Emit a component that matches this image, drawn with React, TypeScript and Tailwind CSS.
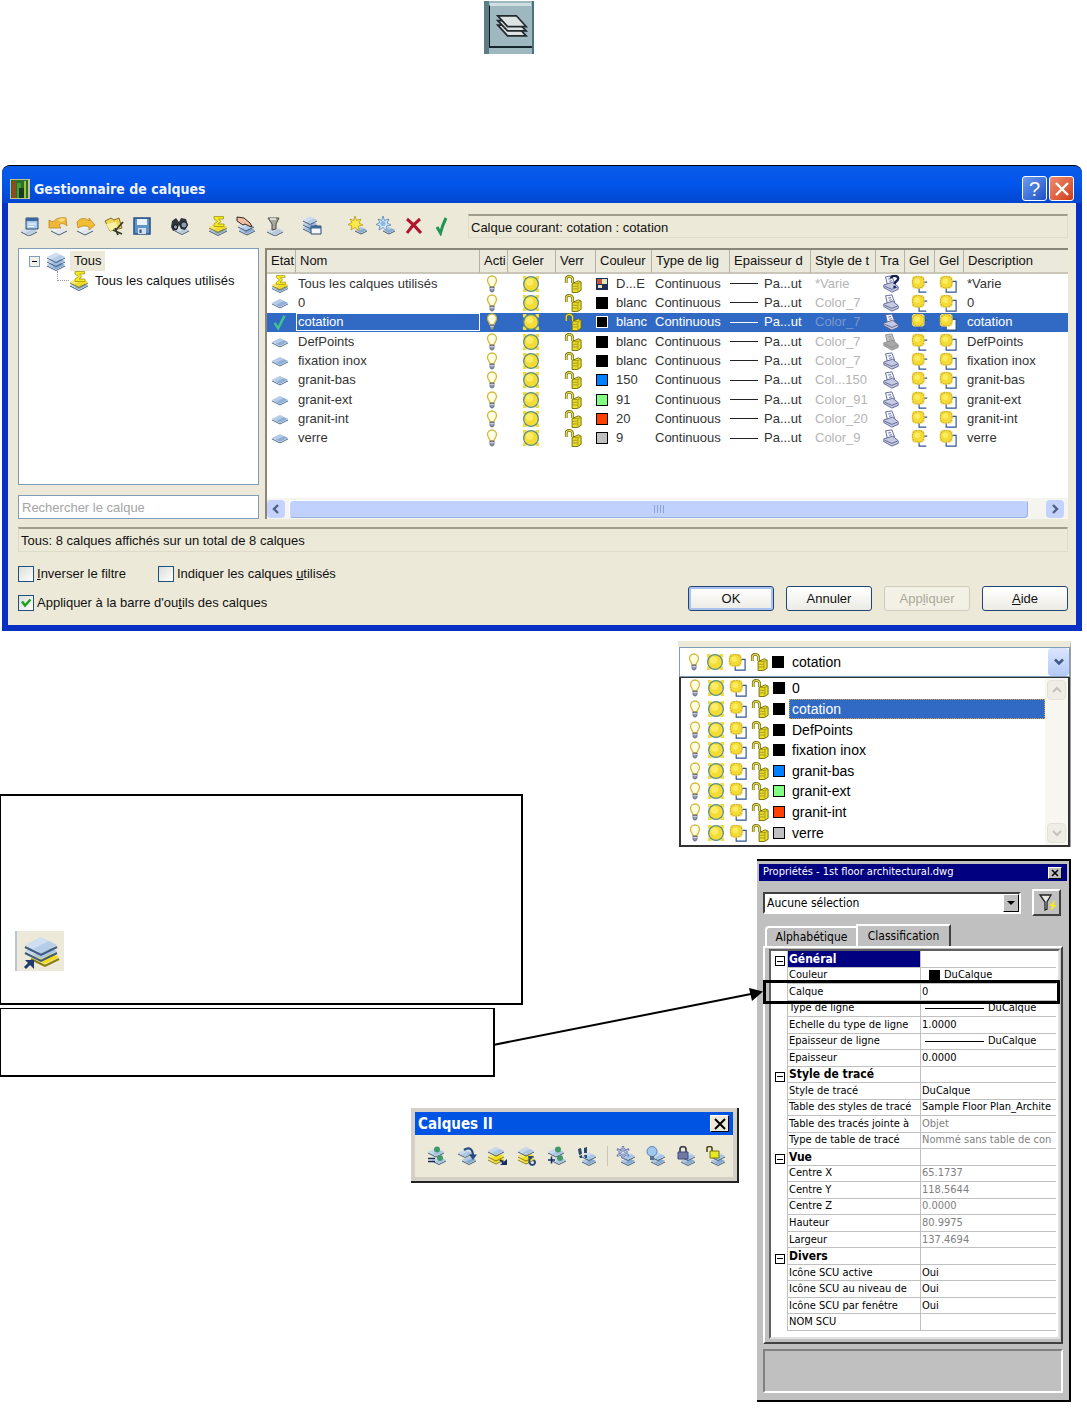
import { useState } from "react";
import type { ReactNode } from "react";

type Layer = {
  name: string;
  color: string;
  hex: string;
  plotStyle: string;
  kind?: "filter" | "current" | "noplot";
};

type Property = {
  label: string;
  value?: string;
  section?: boolean;
  muted?: boolean;
  sample?: "swatch" | "line";
};

const layers: Layer[] = [
  { name: "Tous les calques utilisés", color: "D...E", hex: "#ffffff", plotStyle: "*Varie", kind: "filter" },
  { name: "0", color: "blanc", hex: "#000000", plotStyle: "Color_7" },
  { name: "cotation", color: "blanc", hex: "#000000", plotStyle: "Color_7", kind: "current" },
  { name: "DefPoints", color: "blanc", hex: "#000000", plotStyle: "Color_7", kind: "noplot" },
  { name: "fixation inox", color: "blanc", hex: "#000000", plotStyle: "Color_7" },
  { name: "granit-bas", color: "150", hex: "#0080ff", plotStyle: "Col...150" },
  { name: "granit-ext", color: "91", hex: "#80ff80", plotStyle: "Color_91" },
  { name: "granit-int", color: "20", hex: "#ff4000", plotStyle: "Color_20" },
  { name: "verre", color: "9", hex: "#c0c0c0", plotStyle: "Color_9" },
];

const headers = [
  "Etat",
  "Nom",
  "Acti",
  "Geler",
  "Verr",
  "Couleur",
  "Type de lig",
  "Epaisseur d",
  "Style de t",
  "Tra",
  "Gel",
  "Gel",
  "Description",
];

const properties: Property[] = [
  { label: "Général", section: true },
  { label: "Couleur", value: "DuCalque", sample: "swatch" },
  { label: "Calque", value: "0" },
  { label: "Type de ligne", value: "DuCalque", sample: "line" },
  { label: "Echelle du type de ligne", value: "1.0000" },
  { label: "Epaisseur de ligne", value: "DuCalque", sample: "line" },
  { label: "Epaisseur", value: "0.0000" },
  { label: "Style de tracé", section: true },
  { label: "Style de tracé", value: "DuCalque" },
  { label: "Table des styles de tracé", value: "Sample Floor Plan_Archite" },
  { label: "Table des tracés jointe à", value: "Objet", muted: true },
  { label: "Type de table de tracé", value: "Nommé sans table de con", muted: true },
  { label: "Vue", section: true },
  { label: "Centre X", value: "65.1737", muted: true },
  { label: "Centre Y", value: "118.5644", muted: true },
  { label: "Centre Z", value: "0.0000", muted: true },
  { label: "Hauteur", value: "80.9975", muted: true },
  { label: "Largeur", value: "137.4694", muted: true },
  { label: "Divers", section: true },
  { label: "Icône SCU active", value: "Oui" },
  { label: "Icône SCU au niveau de", value: "Oui" },
  { label: "Icône SCU par fenêtre", value: "Oui" },
  { label: "NOM SCU" },
];

/* ---------- icons ---------- */

function Icon({ children, className = "size-5" }: { children: ReactNode; className?: string }) {
  return (
    <svg viewBox="0 0 20 20" className={`${className} block shrink-0`} aria-hidden="true">
      {children}
    </svg>
  );
}

function Plate({ x = 10, y, r = 8, fill = "#a9c4e4" }: { x?: number; y: number; r?: number; fill?: string }) {
  return (
    <g>
      <path
        d={`M${x - r} ${y + 1}L${x} ${y + r / 2 + 1}L${x + r} ${y + 1}`}
        fill="none"
        stroke={fill === "#f2dc1c" ? "#8a7d08" : "#3d5a7c"}
        strokeWidth="1"
      />
      <path d={`M${x - r} ${y}L${x} ${y - r / 2}L${x + r} ${y}L${x} ${y + r / 2}Z`} fill={fill} />
      <path d={`M${x - r} ${y}L${x} ${y - r / 2}L${x + r / 2} ${y - r / 4}L${x - r / 2} ${y + r / 4}Z`} fill="#ffffff" opacity="0.35" />
    </g>
  );
}

function Stack() {
  return (
    <>
      <Plate y={14} r={9} fill="#86a9d2" />
      <Plate y={10} r={9} fill="#9bb9dc" />
      <Plate y={6} r={9} fill="#b5cde8" />
    </>
  );
}

function Sigma() {
  return <path d="M6 .5h9.500v2.500h-5L13 5.500 10 8h6v2.500H6V8l3.500-2.500L6 3z" fill="#f5ea1e" stroke="#a3951a" strokeWidth="0.8" />;
}

function FilterIcon({ className }: { className?: string }) {
  return (
    <Icon className={className}>
      <Plate y={14} r={9} fill="#86a9d2" />
      <Plate y={11} r={9} fill="#f2dc1c" />
      <Sigma />
    </Icon>
  );
}

function BulbIcon() {
  return (
    <svg viewBox="0 0 12 18" className="block h-[18px] w-3 shrink-0" aria-hidden="true">
      <path d="M4 12C4 9.500 1.500 8.500 1.500 5.500a4.500 4.500 0 0 1 9 0C10.500 8.500 8 9.500 8 12z" fill="#fffde0" stroke="#d3b83c" strokeWidth="1.300" />
      <path d="M4 4.500a2 2 0 0 1 2-1.800" fill="none" stroke="#fff" strokeWidth="1.200" />
      <path d="M4 12h4v3.500L6.800 17H5.200L4 15.500z" fill="#8d95ad" stroke="#4a5274" strokeWidth="0.7" />
      <path d="M4 13.700h4" stroke="#e5e9f5" strokeWidth="0.8" />
    </svg>
  );
}

function SunIcon() {
  return (
    <Icon className="size-[18px]">
      <path d="M1 1h4v4H1zM15 1h4v4h-4zM1 15h4v4H1zM15 15h4v4h-4z" fill="#f3dc3d" />
      <circle cx="10" cy="10" r="8.200" fill="#f5dc35" stroke="#5b8f86" strokeWidth="1.400" />
      <circle cx="8.500" cy="8" r="4" fill="#fcec68" />
    </Icon>
  );
}

function ViewportIcon({ partial = false }: { partial?: boolean }) {
  return (
    <Icon className="size-[18px]">
      <path d={partial ? "M9 12v7h8M13 8h5" : "M8 9v10h11V7h-8"} fill={partial ? "none" : "#ffffff"} stroke="#2d5591" strokeWidth="1.300" />
      <path d="M3 1h10l2 2v10l-2 2H3l-2-2V3z" fill="#f3e06a" />
      <circle cx="8" cy="8" r="6.600" fill="#f5dc35" stroke="#c9ad3a" strokeWidth="1.200" strokeDasharray="2 1" />
      <circle cx="7" cy="7" r="3" fill="#fbec62" />
    </Icon>
  );
}

function LockIcon() {
  return (
    <Icon className="size-[18px]">
      <path d="M2.500 9V4.500C2.500 1 8 .500 9.500 4v5" fill="none" stroke="#77700c" strokeWidth="3" />
      <path d="M2.500 9V4.500C2.500 1 8 .500 9.500 4v5" fill="none" stroke="#e8e05a" strokeWidth="1.300" />
      <path d="M9 9.500 16 6.500 19 8v9l-4 2.500H9z" fill="#e9dc2b" stroke="#6b6408" />
      <path d="M9 9.500h6.500L19 8M15.500 9.500V19M10 12.500h5M10 15.500h5" fill="none" stroke="#9b9114" strokeWidth="0.9" />
    </Icon>
  );
}

function PrinterIcon({ kind }: { kind?: Layer["kind"] }) {
  const off = kind === "noplot";
  return (
    <Icon className="size-[18px]">
      <path d="M4 2l7-1 3 8-8 2z" fill={off ? "#c4c4c4" : "#f4f6ff"} stroke={off ? "#8d8d8d" : "#59618f"} />
      <path d="M2 11l10-3 6 5v3l-7 3-9-5z" fill={off ? "#a9a9a9" : "#c5c9e2"} stroke={off ? "#8d8d8d" : "#59618f"} />
      <path d="M3 12.500l8 3.500 6-2.500M7 4.500l3-.5M8 7l3-.6" fill="none" stroke={off ? "#8d8d8d" : "#59618f"} />
      {kind === "filter" && (
        <path d="M10 4c0-4 8-4 8 0 0 3-4 3-4 6M14 12v2.500" fill="none" stroke="#11224f" strokeWidth="2.600" />
      )}
    </Icon>
  );
}

function Check({ className = "size-5" }: { className?: string }) {
  return (
    <Icon className={className}>
      <path d="M4 11l4 6L15 3" fill="none" stroke="#3fc48c" strokeWidth="2.800" />
    </Icon>
  );
}

function Swatch({ hex, light = false }: { hex: string; light?: boolean }) {
  return (
    <span
      className={`block size-3 shrink-0 border ${light ? "border-white" : "border-black"}`}
      style={{ backgroundColor: hex }}
    />
  );
}

const managerTools: { label: string; gap: string; icon: ReactNode }[] = [
  {
    label: "Nouveau filtre",
    gap: "",
    icon: (
      <>
        <Plate y={15} x={9} fill="#b8cbe2" />
        <path d="M6 2h12v11H6z" fill="#a9cdf0" stroke="#27486f" />
        <path d="M6 2h12v3H6z" fill="#3e689c" />
        <path d="M8 8h8M8 10.500h6" stroke="#ffffff" />
      </>
    ),
  },
  {
    label: "Etat précédent",
    gap: "ml-2",
    icon: (
      <>
        <Plate y={14} x={11} fill="#dfe6ee" />
        <path d="M1 4l4 2c3-4 8-5 13-4l1 8c-3-3-6-3-8-1l2 3H1z" fill="#efb63a" stroke="#b98524" strokeWidth="0.8" />
        <path d="M9 4l5-2 4 1-4 3z" fill="#f9dc78" />
      </>
    ),
  },
  {
    label: "Etat suivant",
    gap: "ml-2",
    icon: (
      <>
        <Plate y={14} x={9} fill="#dfe6ee" />
        <path d="M1 6c3-4 8-5 12-1V2l6 7-6 5v-3c-4-2-8-1-11 1z" fill="#f1bd34" stroke="#b98524" strokeWidth="0.8" />
      </>
    ),
  },
  {
    label: "Gestionnaire des états",
    gap: "ml-2",
    icon: (
      <>
        <path d="M1 5l5 10 12-3-3-10-5 2-3-2z" fill="#efd355" stroke="#81711e" />
        <path d="M2 8l4 7 9-2-3-7z" fill="#faf0a4" />
        <path d="M19 6l-8 9M9 14l9 4M11 12l3 7" stroke="#343b28" strokeWidth="1.800" />
      </>
    ),
  },
  {
    label: "Enregistrer",
    gap: "ml-2",
    icon: (
      <>
        <path d="M2 2h16v16H2z" fill="#5f94c8" stroke="#274e83" strokeWidth="1.500" />
        <path d="M5 3h10v6H5z" fill="#e9f1fa" />
        <path d="M6 12h8v6H6z" fill="#d5dfec" />
        <path d="M7.500 13.500h2V17h-2z" fill="#274e83" />
      </>
    ),
  },
  {
    label: "Rechercher",
    gap: "ml-[18px]",
    icon: (
      <>
        <Plate y={14} x={12} r={7} fill="#b8c8db" />
        <path d="M2 5l4-3 3 4 2-4 5 1 2 6-3 5-4-1-2-4-2 5-4 1-2-4z" fill="#30353d" />
        <circle cx="14" cy="9" r="3.200" fill="#8c9cb0" stroke="#111" />
        <circle cx="5.500" cy="11" r="2.200" fill="#8c9cb0" stroke="#111" />
      </>
    ),
  },
  {
    label: "Nouveau filtre de propriétés",
    gap: "ml-[18px]",
    icon: (
      <>
        <Plate y={14} r={9} fill="#86a9d2" />
        <Plate y={11} r={9} fill="#f2dc1c" />
        <Sigma />
      </>
    ),
  },
  {
    label: "Nouveau filtre de groupe",
    gap: "ml-2",
    icon: (
      <>
        <Plate y={14} x={11} fill="#86a9d2" />
        <Plate y={10} x={10} fill="#b5cde8" />
        <path d="M1 1l7 1 6 5 2 4-3-1-4-2-2 1-6-4z" fill="#efc1a4" stroke="#3b2418" />
      </>
    ),
  },
  {
    label: "Inverser",
    gap: "ml-2",
    icon: (
      <>
        <Plate y={15} x={11} fill="#b8c8db" />
        <path d="M4 2h11l-3 6v5l-4 1V8z" fill="#a8a8a0" stroke="#494942" />
        <path d="M6 3h6" stroke="#f4f4f0" strokeWidth="1.500" />
      </>
    ),
  },
  {
    label: "Etats de calque",
    gap: "ml-[18px]",
    icon: (
      <>
        <Plate y={12} x={8} r={7} fill="#86a9d2" />
        <Plate y={8} x={8} r={7} fill="#9bb9dc" />
        <Plate y={4} x={8} r={7} fill="#b5cde8" />
        <path d="M9 10h10v8H9z" fill="#f3f7fc" stroke="#27486f" />
        <path d="M9 10h10v2.500H9z" fill="#3e689c" />
      </>
    ),
  },
  {
    label: "Nouveau calque",
    gap: "ml-[26px]",
    icon: (
      <>
        <Plate y={14} x={13} r={6} fill="#86a9d2" />
        <path d="M7 0l1.500 4.500L13 3l-2 4 4 2-4.500 1L11 15 7 11.500 3 14l1-4-4-1.500L4 6.500 2 3l3.800 1.500z" fill="#fbe948" stroke="#b89b19" strokeWidth="0.8" />
      </>
    ),
  },
  {
    label: "Nouveau calque gelé",
    gap: "ml-2",
    icon: (
      <>
        <Plate y={14} x={13} r={6} fill="#86a9d2" />
        <path d="M7 0l1.500 4.500L13 3l-2 4 4 2-4.500 1L11 15 7 11.500 3 14l1-4-4-1.500L4 6.500 2 3l3.800 1.500z" fill="#cfe6fa" stroke="#5785b5" strokeWidth="0.8" />
        <circle cx="7" cy="7.500" r="2.500" fill="#8cb8e2" />
      </>
    ),
  },
  {
    label: "Supprimer",
    gap: "ml-2",
    icon: <path d="M3 3c5 4 9 8 14 14M16 3C11 7 7 11 3 17" fill="none" stroke="#b01530" strokeWidth="3" />,
  },
  {
    label: "Définir courant",
    gap: "ml-2",
    icon: <path d="M5 11l3.500 6C10 11 12 6 14 2" fill="none" stroke="#1f9455" strokeWidth="3" />,
  },
];

function SmallStack() {
  return (
    <>
      <Plate y={15} x={12} r={7} fill="#86a9d2" />
      <Plate y={10} x={12} r={7} fill="#a7c5e8" />
    </>
  );
}

const layerTools: { label: string; icon: ReactNode }[] = [
  {
    label: "Copier les propriétés",
    icon: (
      <>
        <Plate y={6} x={9} r={8} />
        <Plate y={14} x={12} r={7} />
        <circle cx="10" cy="3.500" r="3" fill="#3f9a68" />
        <circle cx="13" cy="12" r="3" fill="#3f9a68" />
        <path d="M1 12.500h7M1 15.500h7" stroke="#172c62" strokeWidth="1.500" />
      </>
    ),
  },
  {
    label: "Calque précédent",
    icon: (
      <>
        <Plate y={14} x={12} r={7} fill="#86a9d2" />
        <Plate y={7} x={8} r={7} />
        <path d="M7 4c6-4 9 0 9 6" fill="none" stroke="#254a85" strokeWidth="2.200" />
        <path d="M12 8.500h8L16 14z" fill="#254a85" />
      </>
    ),
  },
  {
    label: "Isoler",
    icon: (
      <>
        <Plate y={13} x={9} fill="#f2dc1c" />
        <Plate y={10} x={9} fill="#f2dc1c" />
        <Plate y={5} x={9} />
        <path d="M13 14l4 3" stroke="#172c62" strokeWidth="2" />
        <path d="M20 13v6h-7z" fill="#172c62" />
      </>
    ),
  },
  {
    label: "Ne plus isoler",
    icon: (
      <>
        <Plate y={13} x={9} fill="#f2dc1c" />
        <Plate y={10} x={9} fill="#f2dc1c" />
        <Plate y={5} x={9} />
        <path d="M12.500 14c-1 3 1 5 3 5s4-3 1-5" fill="none" stroke="#254a85" strokeWidth="2" />
        <path d="M11 10h6l-5 5z" fill="#254a85" />
      </>
    ),
  },
  {
    label: "Copier vers un calque",
    icon: (
      <>
        <Plate y={6} x={9} r={8} />
        <Plate y={14} x={12} r={7} />
        <circle cx="11" cy="3.500" r="3" fill="#3f9a68" />
        <circle cx="13" cy="12" r="3" fill="#3f9a68" />
        <path d="M1 14h7M4.500 10.500v7" stroke="#172c62" strokeWidth="1.500" />
      </>
    ),
  },
  {
    label: "Parcourir les calques",
    icon: (
      <>
        <SmallStack />
        <path d="M1 3l3-1 1 6-3 1zM2 10l3-1v3H3zM7 2l3-1v6H7zM7 9h3v3H8z" fill="#254a6d" />
      </>
    ),
  },
  {
    label: "Geler",
    icon: (
      <>
        <SmallStack />
        <path d="M7 0v13M1 3l12 7M1 10l12-7" stroke="#7182b4" strokeWidth="2.400" />
        <circle cx="7" cy="6.500" r="4" fill="none" stroke="#7182b4" strokeWidth="1.200" />
        <path d="M7 1v11M2 4l10 5.500M2 9.500L12 4" stroke="#dfe7fa" strokeWidth="0.8" />
      </>
    ),
  },
  {
    label: "Désactiver",
    icon: (
      <>
        <SmallStack />
        <circle cx="6" cy="5.500" r="5" fill="#9fc8ef" stroke="#5d83b1" />
        <path d="M4 10h4v4H4z" fill="#59708f" />
      </>
    ),
  },
  {
    label: "Verrouiller",
    icon: (
      <>
        <SmallStack />
        <path d="M4 6V3c0-3 6-3 6 0v3" fill="none" stroke="#30364c" strokeWidth="1.600" />
        <path d="M2 6h10v7H2z" fill="#6f79a6" stroke="#424c7b" />
      </>
    ),
  },
  {
    label: "Déverrouiller",
    icon: (
      <>
        <SmallStack />
        <path d="M1 6V2c0-2 5-2 5 0v3" fill="none" stroke="#4c4a12" strokeWidth="1.600" />
        <path d="M4 5h9v7H4z" fill="#e6ea24" stroke="#77750e" />
      </>
    ),
  },
];

/* ---------- layer manager ---------- */

function CheckBox({ children, defaultChecked = false }: { children: ReactNode; defaultChecked?: boolean }) {
  const [checked, setChecked] = useState(defaultChecked);

  return (
    <label className="flex items-center gap-[3px]">
      <span className="relative block size-4">
        <input
          type="checkbox"
          checked={checked}
          onChange={() => setChecked(!checked)}
          className="block size-4 appearance-none border border-[#1c5180] bg-gradient-to-br from-[#dcdcd7] to-white"
        />
        {checked && (
          <svg viewBox="0 0 16 16" className="pointer-events-none absolute inset-0" aria-hidden="true">
            <path d="M4 6.500l3 4 5.500-6" fill="none" stroke="#21a121" strokeWidth="2.500" />
          </svg>
        )}
      </span>
      <span>{children}</span>
    </label>
  );
}

function LayerTable() {
  const [selected, setSelected] = useState("cotation");

  return (
    <table className="h-[198px] w-full table-fixed border-separate border-spacing-0 whitespace-nowrap">
      <colgroup>
        <col className="w-[29px]" />
        <col className="w-[184px]" />
        <col className="w-7" />
        <col className="w-12" />
        <col className="w-10" />
        <col className="w-14" />
        <col className="w-[78px]" />
        <col className="w-[81px]" />
        <col className="w-[65px]" />
        <col className="w-[29px]" />
        <col className="w-[30px]" />
        <col className="w-[29px]" />
        <col />
      </colgroup>
      <thead>
        <tr className="h-6">
          {headers.map((header, index) => (
            <th
              key={index}
              className="overflow-hidden border-b-2 border-r border-[#cbc7b8] border-r-[#b5b2a2] bg-[#ebe9dc] p-0 pl-1 text-left font-normal last:border-r-0"
            >
              {header}
            </th>
          ))}
        </tr>
      </thead>
      <tbody>
        {layers.map((layer) => {
          const active = layer.name === selected;

          return (
            <tr
              key={layer.name}
              onClick={() => setSelected(layer.name)}
              className={active ? "bg-[#316ac5] text-white" : "text-[#333333]"}
            >
              <td className="p-0 pl-1">
                {layer.kind === "filter" ? (
                  <FilterIcon className="size-[18px]" />
                ) : layer.kind === "current" ? (
                  <Check className="size-[18px]" />
                ) : (
                  <Icon className="size-[18px]">
                    <Plate y={10} r={9} fill="#8fb0d8" />
                  </Icon>
                )}
              </td>
              <td className="p-0">
                <span className={`block border px-px leading-4 ${active ? "border-white" : "border-transparent"}`}>
                  {layer.name}
                </span>
              </td>
              <td className="p-0 pl-1.5"><BulbIcon /></td>
              <td className="p-0 pl-3.5"><SunIcon /></td>
              <td className="p-0 pl-2"><LockIcon /></td>
              <td className="p-0">
                <span className="flex items-center gap-2">
                  {layer.kind === "filter" ? (
                    <svg viewBox="0 0 12 12" className="size-3 shrink-0" aria-hidden="true">
                      <path d="M0 0h12v12H0z" fill="#1c2d56" />
                      <path d="M1 1h5v5H1z" fill="#c0583d" />
                      <path d="M6 1h5v5H6zM2 7h4v3H2z" fill="#e8e2bd" />
                    </svg>
                  ) : (
                    <Swatch hex={layer.hex} light={active} />
                  )}
                  {layer.color}
                </span>
              </td>
              <td className="p-0 pl-[3px]">Continuous</td>
              <td className="p-0">
                <span className="flex items-center gap-1.5">
                  <span className={`block h-px w-7 ${active ? "bg-white" : "bg-[#222222]"}`} />
                  Pa...ut
                </span>
              </td>
              <td className={`overflow-hidden p-0 pl-1 ${active ? "text-[#7d96cb]" : "text-[#b4b4b4]"}`}>{layer.plotStyle}</td>
              <td className="p-0 pl-1.5"><PrinterIcon kind={layer.kind} /></td>
              <td className="p-0 pl-1.5"><ViewportIcon partial /></td>
              <td className="p-0 pl-1"><ViewportIcon /></td>
              <td className="p-0 pl-[3px]">{layer.kind === "filter" ? "*Varie" : layer.name}</td>
            </tr>
          );
        })}
      </tbody>
    </table>
  );
}

const dialogButton =
  "h-[25px] w-[86px] rounded-[3px] border border-[#1f4674] bg-gradient-to-b from-white to-[#ecebe4]";

function LayerManager() {
  return (
    <section
      aria-label="Gestionnaire de calques"
      className="ml-0.5 mr-[5px] rounded-t-lg border-t border-black bg-[#0831c4] px-1.5 pb-1.5 font-['Liberation_Sans',Arial,sans-serif] text-[13px] leading-4 text-[#111111]"
    >
      <header className="-mx-1.5 flex h-[37px] items-center rounded-t-lg bg-gradient-to-b from-[#0a5be8] via-[#0255ea] to-[#0246d0] px-2 pt-2">
        <svg viewBox="0 0 20 20" className="size-5" aria-hidden="true">
          <path d="M0 0h20v20H0z" fill="#c7c28a" />
          <path d="M1 1h17v18H1z" fill="#28702b" />
          <path d="M2 2h4v17H2z" fill="#8c4b20" />
          <path d="M7 4h4v15H7z" fill="#4b9b31" />
          <path d="M9 9h5v10H9z" fill="#173c20" />
          <path d="M14 2h2v17h-2z" fill="#a3c23c" />
        </svg>
        <h1 className="ml-1 grow font-['DejaVu_Sans_Condensed','DejaVu_Sans',sans-serif] text-[14px] font-bold text-[#eef3ff]">
          Gestionnaire de calques
        </h1>
        <button
          type="button"
          aria-label="Aide contextuelle"
          className="size-[25px] rounded-[3px] border border-white bg-gradient-to-br from-[#6e9cf0] to-[#1e4fc4] text-[20px] leading-none text-white"
        >
          ?
        </button>
        <button
          type="button"
          aria-label="Fermer"
          className="ml-0.5 flex size-[25px] items-center justify-center rounded-[3px] border border-white bg-gradient-to-br from-[#ee8b6c] to-[#cf3c12]"
        >
          <svg viewBox="0 0 16 16" className="size-4" aria-hidden="true">
            <path d="M2 2l12 12M14 2L2 14" stroke="#fff" strokeWidth="2.400" />
          </svg>
        </button>
      </header>

      <div className="bg-[#ece9d8] pb-3.5 pl-2.5 pr-2">
        <div className="flex h-[45px] items-center">
          <div className="flex items-center pl-0.5">
            {managerTools.map((tool) => (
              <button key={tool.label} type="button" aria-label={tool.label} className={tool.gap}>
                <Icon>{tool.icon}</Icon>
              </button>
            ))}
          </div>
          <p className="ml-4 h-6 grow border border-t-2 border-[#dedbcb] border-t-[#a09d8c] pl-0.5 leading-6">
            Calque courant: cotation : cotation
          </p>
        </div>

        <div className="flex gap-1.5">
          <div className="flex w-[241px] shrink-0 flex-col gap-2.5">
            <ul className="grow border border-[#7f9db9] bg-white pl-2.5 pt-0.5">
              <li>
                <div className="flex h-5 items-center">
                  <span className="relative size-[11px] border border-[#7f9db9] bg-[#f1f0e8]">
                    <span className="absolute inset-x-0.5 top-1 h-px bg-black" />
                  </span>
                  <Icon className="ml-1.5 size-5">
                    <Stack />
                  </Icon>
                  <span className="ml-1 bg-[#ece9d8] px-1 leading-5">Tous</span>
                </div>
                <ul>
                  <li className="flex h-5 items-center pl-7">
                    <span className="h-2.5 w-3 self-start border-b border-l border-dotted border-[#9c9c9c]" />
                    <FilterIcon className="size-5" />
                    <span className="ml-1.5">Tous les calques utilisés</span>
                  </li>
                </ul>
              </li>
            </ul>
            <input
              type="search"
              aria-label="Rechercher le calque"
              placeholder="Rechercher le calque"
              className="h-6 w-full border border-[#7f9db9] bg-white px-[3px] placeholder:text-[#a5a5a5]"
            />
          </div>

          <div className="flex h-[271px] min-w-0 grow flex-col justify-between border-l-2 border-t-2 border-[#8a8778] bg-white">
            <LayerTable />
            <div className="flex h-[21px] items-center gap-1 bg-[#f5f4ee]">
              <button type="button" aria-label="Défiler à gauche" className="flex size-[18px] items-center justify-center rounded-sm bg-[#c3d3fd]">
                <svg viewBox="0 0 10 10" className="size-2.5" aria-hidden="true">
                  <path d="M7 1L3 5l4 4" fill="none" stroke="#4d6185" strokeWidth="2.400" />
                </svg>
              </button>
              <div className="flex h-[18px] grow items-center justify-center gap-0.5 rounded-sm border border-b-[#98b1e4] border-r-[#98b1e4] border-white bg-[#c1d1fd]">
                <span className="h-2 w-px bg-[#8ca5d8]" />
                <span className="h-2 w-px bg-[#8ca5d8]" />
                <span className="h-2 w-px bg-[#8ca5d8]" />
                <span className="h-2 w-px bg-[#8ca5d8]" />
              </div>
              <button type="button" aria-label="Défiler à droite" className="ml-3.5 mr-1 flex size-[18px] items-center justify-center rounded-sm bg-[#c3d3fd]">
                <svg viewBox="0 0 10 10" className="size-2.5" aria-hidden="true">
                  <path d="M3 1l4 4-4 4" fill="none" stroke="#4d6185" strokeWidth="2.400" />
                </svg>
              </button>
            </div>
          </div>
        </div>

        <p className="mt-2 h-[25px] border border-t-2 border-[#dedbcb] border-t-[#a09d8c] pl-0.5 leading-6">
          Tous: 8 calques affichés sur un total de 8 calques
        </p>

        <footer className="mt-3.5 flex items-end justify-between">
          <div className="flex flex-col gap-[13px]">
            <div className="flex gap-8">
              <CheckBox>
                <u>I</u>nverser le filtre
              </CheckBox>
              <CheckBox>
                Indiquer les calques <u>u</u>tilisés
              </CheckBox>
            </div>
            <CheckBox defaultChecked>
              Appliquer à la barre d&apos;ou<u>t</u>ils des calques
            </CheckBox>
          </div>
          <div className="flex gap-3">
            <button type="button" className={`${dialogButton} shadow-[inset_0_0_0_2px_#a9c1ee]`}>
              OK
            </button>
            <button type="button" className={dialogButton}>
              Annuler
            </button>
            <button
              type="button"
              disabled
              className="h-[25px] w-[86px] rounded-[3px] border border-[#cfccbb] bg-[#f3f1e6] text-[#aaa897]"
            >
              App<u>l</u>iquer
            </button>
            <button type="button" className={dialogButton}>
              <u>A</u>ide
            </button>
          </div>
        </footer>
      </div>
    </section>
  );
}

/* ---------- layer drop-down ---------- */

function LayerState({ hex }: { hex: string }) {
  return (
    <span className="flex items-center">
      <BulbIcon />
      <span className="ml-1.5"><SunIcon /></span>
      <span className="ml-1"><ViewportIcon /></span>
      <span className="ml-1"><LockIcon /></span>
      <span className="ml-1"><Swatch hex={hex} /></span>
    </span>
  );
}

function LayerDropdown() {
  const [current, setCurrent] = useState("cotation");
  const options = layers.filter((layer) => layer.kind !== "filter");

  return (
    <div className="w-[393px] border-r border-t-[6px] border-r-[#a0a0a0] border-t-[#ece9d8] pl-px font-['Liberation_Sans',Arial,sans-serif] text-[14px] leading-4 text-black">
      <button
        type="button"
        aria-haspopup="listbox"
        aria-expanded="true"
        className="flex h-[30px] w-full items-center border border-[#7f9db9] bg-white pl-2"
      >
        <LayerState hex="#000000" />
        <span className="ml-2 grow text-left">{current}</span>
        <span className="flex h-7 w-[21px] items-center justify-center rounded-sm bg-gradient-to-b from-[#dbe6fe] to-[#b3c9f7]">
          <svg viewBox="0 0 12 12" className="size-3" aria-hidden="true">
            <path d="M2 3.500l4 4 4-4" fill="none" stroke="#3f5a86" strokeWidth="2.500" />
          </svg>
        </span>
      </button>
      <div className="flex border-2 border-t border-[#333333] bg-white">
        <ul role="listbox" aria-label="Calques" className="grid h-[167px] grow auto-rows-fr pb-0.5 pl-2">
          {options.map((layer) => (
            <li
              key={layer.name}
              role="option"
              aria-selected={layer.name === current}
              onClick={() => setCurrent(layer.name)}
              className="flex items-center"
            >
              <LayerState hex={layer.hex} />
              <span
                className={
                  layer.name === current
                    ? "ml-1 grow border border-dotted border-[#d9a440] bg-[#316ac5] px-0.5 leading-[18px] text-white"
                    : "ml-[7px]"
                }
              >
                {layer.name}
              </span>
            </li>
          ))}
        </ul>
        <div className="flex w-[23px] flex-col justify-between bg-[#f7f6f1] p-0.5">
          {["M2 8l4-4 4 4", "M2 4l4 4 4-4"].map((d) => (
            <span key={d} className="flex h-5 items-center justify-center rounded-sm border border-[#e4e2d8] bg-[#efeee6]">
              <svg viewBox="0 0 12 12" className="size-3" aria-hidden="true">
                <path d={d} fill="none" stroke="#c5c3b8" strokeWidth="2" />
              </svg>
            </span>
          ))}
        </div>
      </div>
    </div>
  );
}

/* ---------- properties palette ---------- */

function PropertyTable() {
  return (
    <table className="h-[380px] w-[285px] table-fixed border-separate border-spacing-0 whitespace-nowrap leading-[14px]">
      <colgroup>
        <col className="w-4" />
        <col className="w-[133px]" />
        <col />
      </colgroup>
      <tbody>
        {properties.map((property, index) => (
          <tr key={index}>
            <td className="relative p-0">
              {property.section && (
                <span className="ml-1 mt-1 flex size-2.5 items-center justify-center border border-black">
                  <span className="h-px w-1.5 bg-black" />
                </span>
              )}
              {property.label === "Calque" && (
                <span className="pointer-events-none absolute -left-2 -top-1 z-10 h-6 w-[297px] border-[3px] border-black" />
              )}
            </td>
            <td
              className={`overflow-hidden border-b border-l border-[#c0c0c0] p-0 pl-px ${
                property.section ? "text-[12px] font-bold" : ""
              } ${index === 0 ? "bg-[#000080] text-white" : ""}`}
            >
              {property.label}
            </td>
            <td
              className={`overflow-hidden border-b border-l border-[#c0c0c0] p-0 ${
                property.muted ? "text-[#808080]" : ""
              } ${property.sample ? "pl-1" : "pl-px"}`}
            >
              {property.sample === "swatch" ? (
                <span className="flex items-center gap-1 pl-1">
                  <span className="size-[11px] bg-black" />
                  {property.value}
                </span>
              ) : property.sample === "line" ? (
                <span className="flex items-center gap-1">
                  <span className="h-px w-[59px] bg-black" />
                  {property.value}
                </span>
              ) : (
                property.value
              )}
            </td>
          </tr>
        ))}
      </tbody>
    </table>
  );
}

function PropertiesPalette() {
  return (
    <section
      aria-label="Propriétés"
      className="w-[314px] border-b-2 border-r-2 border-t-2 border-black bg-[#c0c0c0] pb-[7px] pl-0.5 pr-0.5 pt-[3px] font-['DejaVu_Sans_Condensed','DejaVu_Sans',sans-serif] text-[11px] text-black"
    >
      <header className="flex h-[17px] items-center justify-between bg-[#000080] pl-1 pr-[5px] text-white">
        <h2>Propriétés - 1st floor architectural.dwg</h2>
        <button type="button" aria-label="Fermer" className="flex h-3 w-3.5 items-center justify-center border border-b-black border-r-black border-white bg-[#c0c0c0]">
          <svg viewBox="0 0 8 8" className="size-2" aria-hidden="true">
            <path d="M1 1l6 6M7 1L1 7" stroke="#000" strokeWidth="1.600" />
          </svg>
        </button>
      </header>

      <div className="px-1">
        <div className="flex items-center justify-between pr-0.5 pt-2">
          <div className="relative">
            <select
              aria-label="Sélection"
              className="block h-[22px] w-[258px] appearance-none border-2 border-b-white border-l-[#404040] border-r-white border-t-[#404040] bg-white pl-0.5 text-[12px]"
            >
              <option>Aucune sélection</option>
            </select>
            <span className="pointer-events-none absolute right-0.5 top-0.5 flex h-[18px] w-4 items-center justify-center border border-b-black border-r-black border-white bg-[#c0c0c0]">
              <svg viewBox="0 0 8 8" className="size-2" aria-hidden="true">
                <path d="M0 2h8L4 6z" />
              </svg>
            </span>
          </div>
          <button
            type="button"
            aria-label="Sélection rapide"
            className="flex h-[27px] w-[29px] items-center justify-center border-2 border-b-[#404040] border-l-white border-r-[#404040] border-t-white"
          >
            <Icon>
              <path d="M3 2h11l-4 7v7l-2 1V9z" fill="#e8e8e8" stroke="#222" strokeWidth="1.300" />
              <path d="M18 7l-6 6h3l-2 5 7-6h-3z" fill="#f5e923" />
            </Icon>
          </button>
        </div>

        <div role="tablist" className="mt-2 flex items-end pl-0.5 text-[12px]">
          <button
            type="button"
            role="tab"
            aria-selected="false"
            className="h-5 w-[91px] rounded-tl-sm border-l-2 border-t-2 border-white"
          >
            Alphabétique
          </button>
          <button
            type="button"
            role="tab"
            aria-selected="true"
            className="h-[22px] w-[95px] border-l-2 border-r-2 border-t-2 border-l-white border-r-[#404040] border-t-white"
          >
            Classification
          </button>
        </div>

        <div className="h-[398px] border-2 border-b-[#404040] border-l-white border-r-[#404040] border-t-white pb-[3px] pl-1 pr-px pt-px">
          <div className="h-full border-2 border-b-[#e0e0e0] border-l-[#606060] border-r-[#e0e0e0] border-t-[#606060] bg-white">
            <PropertyTable />
          </div>
        </div>
        <div className="mt-[5px] h-11 border-2 border-b-white border-l-[#808080] border-r-white border-t-[#808080]" />
      </div>
    </section>
  );
}

/* ---------- floating toolbar ---------- */

function LayerToolbar() {
  return (
    <section
      aria-label="Calques II"
      className="ml-[411px] w-[328px] border-b-2 border-r-2 border-[#222222] bg-[#d4d0c8] p-1 font-['DejaVu_Sans_Condensed','DejaVu_Sans',sans-serif]"
    >
      <header className="flex h-[23px] items-center justify-between bg-[#0054e3] pl-[3px] pr-1">
        <h2 className="text-[15px] font-bold leading-4 text-white">Calques II</h2>
        <button
          type="button"
          aria-label="Fermer"
          className="flex h-[17px] w-[19px] items-center justify-center border border-b-black border-r-black border-white bg-[#ece9d8]"
        >
          <svg viewBox="0 0 12 12" className="size-3" aria-hidden="true">
            <path d="M1 1l10 10M11 1L1 11" stroke="#000" strokeWidth="2" />
          </svg>
        </button>
      </header>
      <div className="flex h-[42px] items-center gap-2.5 bg-[#ece9d8] pl-3">
        {layerTools.map((tool, index) => (
          <button
            key={tool.label}
            type="button"
            aria-label={tool.label}
            className={index === 6 ? "border-l border-[#c9c5b2] pl-2" : ""}
          >
            <Icon>{tool.icon}</Icon>
          </button>
        ))}
      </div>
    </section>
  );
}

export default function App() {
  return (
    <main className="min-h-screen overflow-hidden bg-white pb-2">
      <div className="flex h-[165px] justify-center pr-[70px] pt-px">
        <button
          type="button"
          aria-label="Calques"
          className="flex h-[53px] w-[50px] items-start border-l-[5px] border-r-2 border-[#5c7c86] border-r-[#49737e] bg-[#9fb8bf]"
        >
          <svg viewBox="0 0 44 52" className="h-[52px] w-11" aria-hidden="true">
            <path d="M0 4V46" stroke="#111" strokeWidth="2" />
            <path d="M1 3h42" stroke="#cfdfe2" strokeWidth="3" />
            <path d="M0 46.500h44" stroke="#16252b" strokeWidth="2" />
            <g fill="#dde2e3" stroke="#222a2d" strokeWidth="1.800">
              <path d="M9 24h19l10 11H19z" />
              <path d="M9 19.500h19l10 10.500H19z" />
              <path d="M9 14.500h19l10 11H19z" />
            </g>
          </svg>
        </button>
      </div>

      <LayerManager />

      <div className="flex justify-between pr-4 pt-2.5">
        <div className="w-[739px] shrink-0 pt-[153px]">
          <div className="flex h-[211px] w-[523px] border-2 border-l border-black pl-3.5 pt-[135px]">
            <button type="button" aria-label="Isoler les calques" className="h-10 w-[49px] border-l-2 border-[#b5c6da] bg-[#ece9d8] pl-1">
              <Icon className="size-10">
                <Plate y={13} x={12} r={7} fill="#f2dc1c" />
                <Plate y={10} x={10} r={8} fill="#a9c4e4" />
                <Plate y={7} x={10} r={8} fill="#b5cde8" />
                <path d="M2 18.500l3-3" stroke="#1e3c70" strokeWidth="1.500" />
                <path d="M2 14.500h4.500V19z" fill="#1e3c70" />
              </Icon>
            </button>
          </div>
          <div className="relative mt-[3px] h-[69px] w-[495px] border-2 border-l border-t border-black">
            <svg viewBox="0 0 272 62" className="pointer-events-none absolute -top-6 left-full z-20 h-[62px] w-[272px]" aria-hidden="true">
              <path d="M0 60L258 9" stroke="#000" strokeWidth="2" />
              <path d="M270 6.500L256 3l3 13z" />
            </svg>
          </div>
          <div className="mt-[31px]">
            <LayerToolbar />
          </div>
        </div>
        <div className="-ml-16 flex shrink-0 flex-col items-end gap-3">
          <LayerDropdown />
          <PropertiesPalette />
        </div>
      </div>
    </main>
  );
}
